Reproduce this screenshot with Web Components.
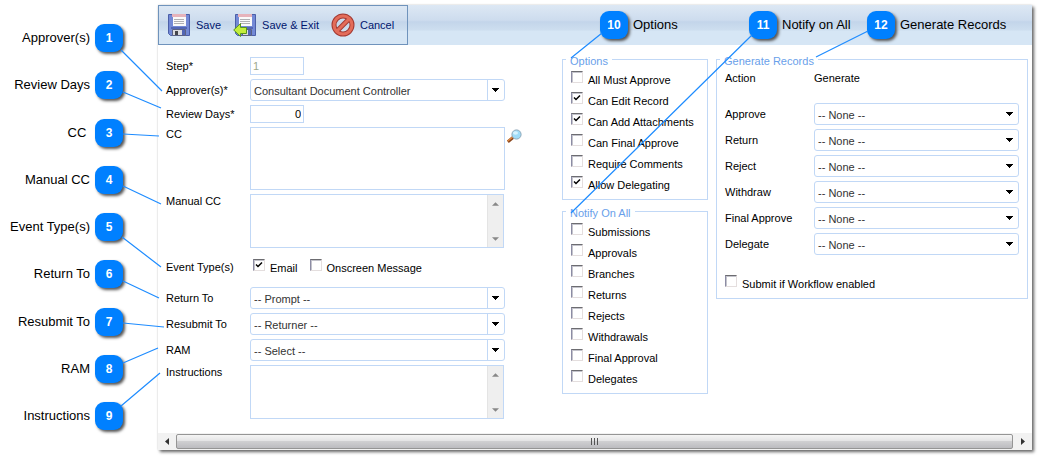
<!DOCTYPE html>
<html lang="en">
<head>
<meta charset="utf-8">
<title>Workflow step</title>
<style>
body { margin: 0; background: #fff; color: #000; font: 11px/14px "Liberation Sans", Arial, sans-serif; }
</style>
</head>
<body>
<workflow-page></workflow-page>

<template id="t-page">
<style>
:host { display: grid; grid-template-columns: 158px minmax(0, 1fr); position: relative; padding: 5px 9px 9px 0; }
.notes { display: flex; flex-direction: column; justify-content: space-between; align-items: flex-end; padding: 19px 35px 20px 0; }
.panel { background: #fff; box-shadow: 2px 2px 3px #666, 0 0 2px #ddd; }
.body { display: grid; grid-template-columns: 388px 146px minmax(0, 1fr); column-gap: 8px; align-items: start; padding: 6px 4px 14px 8px; }
.groups { display: grid; gap: 3px; }
.top-notes { display: grid; grid-template-columns: 149px 118px auto; margin-left: 192px; align-items: center; }
.lines { position: absolute; left: 0; top: 0; width: 100%; height: 100%; pointer-events: none; stroke: #1e8cff; stroke-width: 1.2; }
</style>
<div class="notes">
<call-out number="1" flip>Approver(s)</call-out>
<call-out number="2" flip>Review Days</call-out>
<call-out number="3" flip>CC&nbsp;</call-out>
<call-out number="4" flip>Manual CC</call-out>
<call-out number="5" flip>Event Type(s)</call-out>
<call-out number="6" flip>Return To</call-out>
<call-out number="7" flip>Resubmit To</call-out>
<call-out number="8" flip>RAM</call-out>
<call-out number="9" flip>Instructions</call-out>
</div>
<main class="panel">
<tool-bar>
<div class="top-notes" slot="notes">
<call-out number="10">Options</call-out>
<call-out number="11">Notify on All</call-out>
<call-out number="12">Generate Records</call-out>
</div>
</tool-bar>
<div class="body">
<step-form></step-form>
<div class="groups">
<field-group heading="Options">
<check-row>All Must Approve</check-row>
<check-row checked>Can Edit Record</check-row>
<check-row checked>Can Add Attachments</check-row>
<check-row>Can Final Approve</check-row>
<check-row>Require Comments</check-row>
<check-row checked>Allow Delegating</check-row>
</field-group>
<field-group heading="Notify On All">
<check-row>Submissions</check-row>
<check-row>Approvals</check-row>
<check-row>Branches</check-row>
<check-row>Returns</check-row>
<check-row>Rejects</check-row>
<check-row>Withdrawals</check-row>
<check-row>Final Approval</check-row>
<check-row>Delegates</check-row>
</field-group>
</div>
<field-group heading="Generate Records">
<generate-list></generate-list>
<check-row>Submit if Workflow enabled</check-row>
</field-group>
</div>
<scroll-strip></scroll-strip>
</main>
<svg class="lines" aria-hidden="true">
<path fill="none" d="M121 50 162 91M123 92 161 108M123 134 159 136M123 186 161 204M122 237 161 267M123 281 159 298M123 323 164 327M123 363 158 348M121 406 160 373M602 33 571 58M752 35 571 213M868 31 816 57"/>
</svg>
</template>

<template id="t-callout">
<style>
:host { display: flex; align-items: center; gap: 5px; font-size: 13px; line-height: 16px; white-space: nowrap; }
:host([flip]) { flex-direction: row-reverse; }
b { display: grid; place-items: center; width: 28px; height: 28px; flex: none; border-radius: 9px; background: #0080ff; color: #fff; font-size: 12px; box-shadow: 2px 2px 3px #555; }
</style>
<b></b><span><slot></slot></span>
</template>

<template id="t-toolbar">
<style>
:host { display: flex; height: 40px; background: linear-gradient(#dde8f4, #cddcee 38%, #c3d5ea 42%, #cddeef 62%, #d6e6f5 66%); }
.set { display: flex; align-items: center; box-sizing: border-box; width: 250px; border: 1px solid #6f93bc; padding-left: 8px; gap: 12px; }
button { display: flex; align-items: center; gap: 5px; border: 0; padding: 0; background: none; color: #00156e; font: inherit; white-space: nowrap; }
svg { width: 24px; height: 24px; flex: none; }
</style>
<div class="set">
<button type="button"><svg viewBox="0 0 24 24"><path fill="#7389d6" stroke="#4b5fa8" d="M1.500 1.500H22.500V22.500H3.500L1.500 20.500Z"/><path fill="#fafafa" d="M6 1H19V13H6Z"/><path fill="#e6b3bb" d="M5 1H19V4H5Z"/><path stroke="#b0b0b4" d="M7 6.500H17M7 8.500H17M7 10.500H17"/><path fill="#5266b4" d="M4 14H20V16H4Z"/><path fill="#dcdce0" stroke="#5b6284" d="M5.500 16.500H18.500V22.500H5.500Z"/><path fill="#45464b" d="M8 18H11V22H8Z"/><path fill="#5266b4" d="M15 17H18V22H15Z"/></svg><span>Save</span></button>
<button type="button"><svg viewBox="0 0 24 24"><path fill="#7389d6" stroke="#4b5fa8" d="M2.500 1.500H22.500V22.500H4.500L2.500 20.500Z"/><path fill="#fafafa" d="M6 1H19V13H6Z"/><path fill="#e6b3bb" d="M5 1H19V4H5Z"/><path stroke="#b0b0b4" d="M7 6.500H17M7 8.500H17M7 10.500H17"/><path fill="#5266b4" d="M8 14H20V16H8Z"/><path fill="#dcdce0" stroke="#5b6284" d="M9.500 16.500H18.500V22.500H9.500Z"/><path fill="#5266b4" d="M15 17H18V22H15Z"/><path fill="#c3ee3c" stroke="#56941b" d="M.700 17 7.500 10.500V14.500H13.500V20.500H7.500V23.500Z"/></svg><span>Save &amp; Exit</span></button>
<button type="button"><svg viewBox="0 0 24 24"><circle cx="12" cy="12" r="9" fill="none" stroke="#a33a33" stroke-width="5"/><path stroke="#a33a33" stroke-width="5" d="M5.500 18.500 18.500 5.500"/><circle cx="12" cy="12" r="9" fill="none" stroke="#e36c5a" stroke-width="3"/><path stroke="#e36c5a" stroke-width="3" d="M5.500 18.500 18.500 5.500"/></svg><span>Cancel</span></button>
</div>
<slot name="notes"></slot>
</template>

<template id="t-group">
<style>
:host { display: block; min-width: 0; }
fieldset { margin: 0; padding: 0; border: 1px solid #c1d8f6; min-width: 0; }
legend { margin-left: 3px; padding: 4px 4px 0; line-height: 12px; color: #6a9fea; }
div { padding: 2px 8px 4px; }
</style>
<fieldset><legend></legend><div><slot></slot></div></fieldset>
</template>

<template id="t-check">
<style>
:host { display: block; }
label { display: flex; align-items: flex-start; gap: 5px; padding-top: 2px; line-height: 19px; white-space: nowrap; }
input { appearance: none; box-sizing: border-box; width: 12px; height: 12px; flex: none; margin: 0; border: 1px solid; border-color: #6c6c70 #e4dede #e4dede #8c8ca4; background: #fff; box-shadow: inset 1px 1px #c4c4cc; }
input:checked { background: #fff url("data:image/svg+xml,%3Csvg xmlns='http://www.w3.org/2000/svg' viewBox='0 0 10 10'%3E%3Cpath d='M2 4.500 4 6.500 8 2.500' fill='none' stroke='black' stroke-width='1.500'/%3E%3C/svg%3E"); }
</style>
<label><input type="checkbox"><span><slot></slot></span></label>
</template>

<template id="t-form">
<style>
:host { display: grid; grid-template-columns: 84px 255px auto; justify-content: start; row-gap: 4px; align-items: center; padding-top: 6px; }
.top { align-self: start; }
input, textarea { box-sizing: border-box; margin: 0; border: 1px solid #c1d8f6; border-radius: 0; background: #fff; font: inherit; outline: 0; }
input { grid-column: 2 / 4; width: 54px; height: 18px; padding: 0 2px; }
input:disabled { color: #9ca88c; }
.num { text-align: right; }
.cc { display: block; width: 255px; height: 63px; resize: none; }
.find { align-self: start; border: 0; padding: 2px 0 0 2px; margin: 0; background: none; line-height: 0; }
.find svg { width: 15px; height: 14px; }
.wide { grid-column: 2 / 4; }
drop-down { grid-column: 2; }
.checks { grid-column: 2 / 4; display: flex; gap: 12px; height: 26px; padding: 5px 0 0 3px; }
.event { line-height: 31px; }
</style>
<label for="step">Step*</label><input id="step" value="1" disabled>
<span>Approver(s)*</span><drop-down split name="Approver(s)" value="Consultant Document Controller"></drop-down><i></i>
<label for="days">Review Days*</label><input id="days" class="num" value="0">
<label for="cc" class="top">CC</label><textarea id="cc" class="cc"></textarea>
<button class="find" type="button" aria-label="Find"><svg viewBox="0 0 15 14"><path stroke="#8a451b" stroke-width="3" d="M.8 12.800 6 8.500"/><path stroke="#e08a42" stroke-width="1.400" d="M.8 12 6 7.800"/><circle cx="9.500" cy="5.500" r="4.600" fill="#9fdcf8" stroke="#8fa7b8"/><ellipse cx="8.500" cy="4" rx="2.500" ry="1.700" fill="#d6f3ff"/></svg></button>
<span class="top">Manual CC</span><scroll-text class="wide" name="Manual CC"></scroll-text>
<span class="event">Event Type(s)</span><div class="checks"><check-row checked>Email</check-row><check-row>Onscreen Message</check-row></div>
<span>Return To</span><drop-down split name="Return To" value="-- Prompt --"></drop-down><i></i>
<span>Resubmit To</span><drop-down split name="Resubmit To" value="-- Returner --"></drop-down><i></i>
<span>RAM</span><drop-down split name="RAM" value="-- Select --"></drop-down><i></i>
<span class="top">Instructions</span><scroll-text class="wide" name="Instructions"></scroll-text>
</template>

<template id="t-drop">
<style>
:host { display: block; position: relative; height: 22px; min-width: 0; }
select { appearance: none; box-sizing: border-box; width: 100%; height: 22px; margin: 0; padding: 1px 20px 0 3px; border: 1px solid #c1d8f6; border-radius: 3px; background: #fff; color: #333; font: inherit; outline: 0; }
svg { position: absolute; right: 0; top: 0; width: 18px; height: 22px; pointer-events: none; }
.rule { display: none; stroke: #c1d8f6; }
:host([split]) .rule { display: inline; }
</style>
<select><option></option></select>
<svg aria-hidden="true" viewBox="0 0 18 22"><path class="rule" d="M.5 1V21"/><path shape-rendering="crispEdges" d="M5 9H12V10H11V11H10V12H9V13H8V12H7V11H6V10H5Z"/></svg>
</template>

<template id="t-scrolltext">
<style>
:host { display: flex; box-sizing: border-box; width: 254px; height: 54px; border: 1px solid #c1d8f6; }
textarea { flex: 1; min-width: 0; border: 0; margin: 0; padding: 2px; resize: none; outline: 0; font: inherit; background: #fff; }
div { display: flex; flex-direction: column; justify-content: space-between; align-items: center; width: 16px; padding: 7px 0 6px; background: #efefef; border-left: 1px solid #e4e4e4; box-sizing: border-box; }
svg { width: 7px; height: 4px; fill: #888; }
</style>
<textarea></textarea>
<div aria-hidden="true"><svg viewBox="0 0 8 4"><path d="M0 4H8L4 0Z"/></svg><svg viewBox="0 0 8 4"><path d="M0 0H8L4 4Z"/></svg></div>
</template>

<template id="t-generate">
<style>
:host { display: grid; grid-template-columns: 89px minmax(0, 1fr); row-gap: 4px; align-items: center; padding-bottom: 18px; }
.head { line-height: 18px; padding-bottom: 12px; }
</style>
<span class="head">Action</span><span class="head">Generate</span>
</template>

<template id="t-strip">
<style>
:host { display: grid; grid-template-columns: 18px minmax(0, 1fr) 19px; height: 17px; align-items: center; justify-items: center; background: #f2f2f2; }
.thumb { display: grid; place-items: center; box-sizing: border-box; width: 100%; height: 15px; border: 1px solid #959595; border-radius: 2px; background: linear-gradient(#f5f5f5, #e4e4e5 45%, #cfcfd1 50%, #bcbcc0); }
.arrow { width: 4px; height: 7px; fill: #333; }
.grip { width: 9px; height: 7px; stroke: #555; }
</style>
<svg class="arrow" viewBox="0 0 4 7"><path d="M4 0V7L0 3.500Z"/></svg>
<div class="thumb"><svg class="grip" viewBox="0 0 9 7"><path d="M1.500 0V7M4.500 0V7M7.500 0V7"/></svg></div>
<svg class="arrow" viewBox="0 0 4 7"><path d="M0 0V7L4 3.500Z"/></svg>
</template>

<script>
class Base extends HTMLElement {
  constructor() {
    super();
    this.attachShadow({ mode: "open" });
  }
  connectedCallback() {
    if (this.shadowRoot.childNodes.length) return;
    this.shadowRoot.append(document.getElementById(this.constructor.template).content.cloneNode(true));
    this.ready();
  }
  ready() {}
  find(selector) { return this.shadowRoot.querySelector(selector); }
}
class CallOut extends Base {
  static template = "t-callout";
  ready() { this.find("b").textContent = this.getAttribute("number"); }
}
class ToolBar extends Base { static template = "t-toolbar"; }
class FieldGroup extends Base {
  static template = "t-group";
  ready() { this.find("legend").textContent = this.getAttribute("heading"); }
}
class CheckRow extends Base {
  static template = "t-check";
  ready() { this.find("input").checked = this.hasAttribute("checked"); }
}
class DropDown extends Base {
  static template = "t-drop";
  ready() {
    this.find("option").textContent = this.getAttribute("value");
    this.find("select").setAttribute("aria-label", this.getAttribute("name"));
  }
}
class ScrollText extends Base {
  static template = "t-scrolltext";
  ready() { this.find("textarea").setAttribute("aria-label", this.getAttribute("name")); }
}
class GenerateList extends Base {
  static template = "t-generate";
  ready() {
    for (const name of ["Approve", "Return", "Reject", "Withdraw", "Final Approve", "Delegate"]) {
      const label = document.createElement("span");
      label.textContent = name;
      const drop = document.createElement("drop-down");
      drop.setAttribute("name", name);
      drop.setAttribute("value", "-- None --");
      this.shadowRoot.append(label, drop);
    }
  }
}
class StepForm extends Base { static template = "t-form"; }
class ScrollStrip extends Base { static template = "t-strip"; }
class WorkflowPage extends Base { static template = "t-page"; }

customElements.define("call-out", CallOut);
customElements.define("tool-bar", ToolBar);
customElements.define("field-group", FieldGroup);
customElements.define("check-row", CheckRow);
customElements.define("drop-down", DropDown);
customElements.define("scroll-text", ScrollText);
customElements.define("generate-list", GenerateList);
customElements.define("step-form", StepForm);
customElements.define("scroll-strip", ScrollStrip);
customElements.define("workflow-page", WorkflowPage);
</script>
</body>
</html>
